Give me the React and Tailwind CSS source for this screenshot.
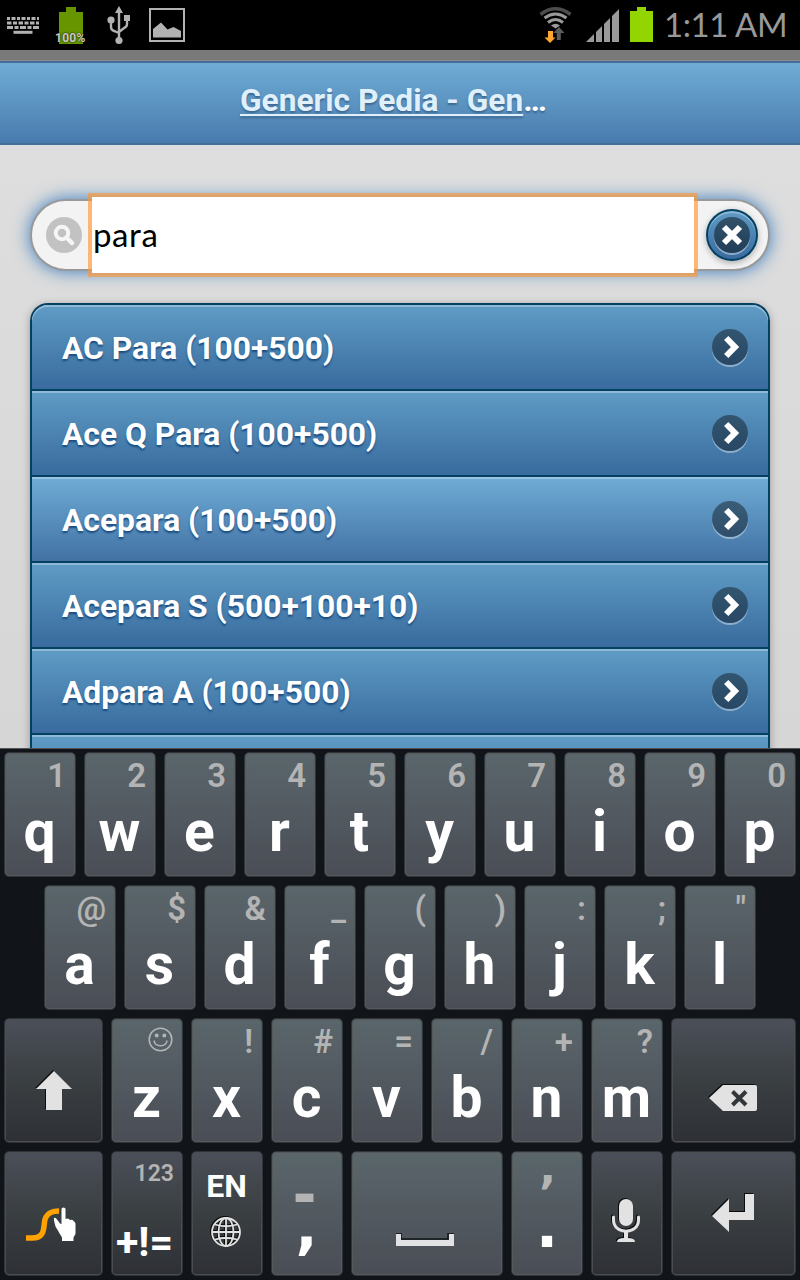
const medicines = [
  { name: "AC Para (100+500)" },
  { name: "Ace Q Para (100+500)" },
  { name: "Acepara (100+500)", active: true },
  { name: "Acepara S (500+100+10)" },
  { name: "Adpara A (100+500)" },
  { name: "" },
];

const topRow = [["q", "1"], ["w", "2"], ["e", "3"], ["r", "4"], ["t", "5"], ["y", "6"], ["u", "7"], ["i", "8"], ["o", "9"], ["p", "0"]];
const homeRow = [["a", "@"], ["s", "$"], ["d", "&"], ["f", "_"], ["g", "("], ["h", ")"], ["j", ":"], ["k", ";"], ["l", '"']];
const bottomRow = [["x", "!"], ["c", "#"], ["v", "="], ["b", "/"], ["n", "+"], ["m", "?"]];

function StatusBar() {
  return (
    <div className="flex h-[50px] shrink-0 items-start bg-black">
      <svg className="mt-4 ml-[7px] shrink-0" width="32" height="19" viewBox="0 0 32 19">
        <g stroke="#b2b2b2" strokeWidth="3">
          <path d="M0 2.5h32" strokeDasharray="3 1.5 4 1.5" />
          <path d="M0 7h32" strokeDasharray="4.5 1.5 4 1.5" />
          <path d="M0 11.5h32" strokeDasharray="6 1.5 4 1.5" />
          <path d="M6.5 16.3h19" />
        </g>
      </svg>
      <div className="relative mt-[7px] ml-5 h-[37px] w-6 shrink-0">
        <svg width="24" height="37" viewBox="0 0 24 37">
          <path d="M7 0h10v5h7v32H0V5h7z" fill="#669500" />
        </svg>
        <span className="absolute top-[25px] -left-1 text-[12px] leading-none font-bold tracking-[0.3px] text-[#c8c8c8] [text-shadow:0_0_2px_#000]">
          100%
        </span>
      </div>
      <svg className="mt-[6px] ml-[24px] shrink-0" width="24" height="39" viewBox="0 0 24 39">
        <g fill="none" stroke="#b2b2b2" strokeWidth="2.4">
          <path d="M12 5v30M4 14v7q0 3 3 4l5 2M20 11v7q0 3-3 4l-5 4" />
        </g>
        <g fill="#b2b2b2">
          <path d="M12 0l4 7H8zM17 9h6v6h-6z" />
          <circle cx="4" cy="14" r="3.6" />
          <circle cx="12" cy="34.5" r="3.6" />
        </g>
      </svg>
      <svg className="mt-2 ml-[18px] shrink-0" width="36" height="34" viewBox="0 0 36 34">
        <path d="M1 1h34v32H1z" fill="none" stroke="#b2b2b2" strokeWidth="2" />
        <path d="M4 29.500V21l8-6.500 6.500 7 6-2.500 7.500 4v6.500z" fill="#b2b2b2" />
      </svg>

      <svg className="mt-[7px] ml-auto shrink-0" width="33" height="36" viewBox="0 0 33 36">
        <g fill="none" stroke="#9a9a9a" strokeWidth="3">
          <path d="M1.500 7.500Q16.500-4 31.500 7.500" stroke="#4c4c4c" strokeWidth="3.500" />
          <path d="M5.500 11Q16.500 3 27.500 11" />
          <path d="M9 15.500Q16.500 9.500 24 15.500" />
        </g>
        <path d="M12 18.500q4.500-3.500 9 0l-4.500 3z" fill="#9a9a9a" />
        <path d="M20 20l5.500 6h-3.700v7h-4v-7h-3.500z" fill="#5c5c5c" />
        <path d="M9 24h5v6.500h2.500L11 36l-5.500-5.500H9z" fill="#ffa630" />
      </svg>
      <svg className="mt-[9px] ml-[14px] shrink-0" width="33" height="33" viewBox="0 0 33 33">
        <path d="M8 25v8H0zM16 17v16h-6V23zM24 9v24h-6V15zM33 0v33h-7V7z" fill="#999" />
      </svg>
      <svg className="mt-[7px] ml-[11px] shrink-0" width="23" height="35" viewBox="0 0 23 35">
        <path d="M7 0h9v4h7v31H0V4h7z" fill="#93d500" />
      </svg>
      <div className="mt-[5px] ml-[11px] w-[136px] shrink-0 font-['Lato'] text-[33px] leading-[38px] tracking-[-0.4px] whitespace-nowrap text-[#999]">
        1:11 AM
      </div>
    </div>
  );
}

function SearchBar() {
  return (
    <div className="mx-[30px] mt-[54px] flex h-[72px] shrink-0 items-center rounded-full border-2 border-[#999] bg-[#f3f3f3] shadow-[0_0_18px_#387bbe]">
      <div className="ml-[14px] flex size-9 shrink-0 items-center justify-center rounded-full bg-[#c2c2c2]">
        <svg width="22" height="22" viewBox="0 0 22 22" fill="none" stroke="#f5f5f5">
          <circle cx="9" cy="9" r="6.300" strokeWidth="4" />
          <path d="M13.500 13.500l5.500 5.500" strokeWidth="4.500" strokeLinecap="round" />
        </svg>
      </div>
      <div className="ml-[6px] flex h-[84px] w-[610px] shrink-0 items-center border-4 border-[#ff9632]/65 bg-white bg-clip-padding pl-px font-['Lato'] text-[33px] tracking-[0.6px] text-black">
        <span className="-mt-0.5 leading-none">para</span>
      </div>
      <div className="ml-2 flex size-[52px] shrink-0 items-center justify-center rounded-full border-2 border-[#044062] bg-linear-to-b from-[#5f9cc5] to-[#396b9e] shadow-[inset_0_2px_0_rgba(255,255,255,0.3),0_2px_6px_rgba(0,0,0,0.3)]">
        <div className="flex size-9 items-center justify-center rounded-full bg-black/45 shadow-[0_2px_0_rgba(255,255,255,0.4)]">
          <svg width="22" height="22" viewBox="0 0 22 22" stroke="#fff" strokeWidth="6">
            <path d="M3 3l16 16M19 3L3 19" />
          </svg>
        </div>
      </div>
    </div>
  );
}

function MedicineRow({ name, active }) {
  return (
    <li
      className={`flex h-[86px] shrink-0 items-center justify-between border-t-2 border-[#044062] pr-5 pl-[30px] shadow-[inset_0_2px_0_rgba(255,255,255,0.3)] first:rounded-t-[16px] first:border-t-0 first:h-[84px] bg-linear-to-b ${
        active ? "from-[#6facd5] to-[#4272a4]" : "from-[#5f9cc5] to-[#396b9e]"
      }`}
    >
      <span className="mt-1 text-[31.8px] leading-none font-bold text-white [text-shadow:0_2px_2px_#194b7e]">{name}</span>
      <div className="flex size-9 items-center justify-center rounded-full bg-black/40 shadow-[0_2px_0_rgba(255,255,255,0.4)]">
        <svg width="20" height="24" viewBox="0 0 20 24" fill="none" stroke="#fff" strokeWidth="6">
          <path d="M6.200 3l8.800 9-8.800 9" />
        </svg>
      </div>
    </li>
  );
}

function Key({ dark, size = "w-[72px]", children }) {
  return (
    <div
      className={`flex h-[125px] shrink-0 flex-col items-center rounded-[5px] border pt-px pr-px ${size} ${
        dark
          ? "border-[#303337] bg-linear-to-b from-[#4b4f59] via-[#3a3f42] to-[#2e3035] shadow-[inset_0_0_0_1px_#4b4e51]"
          : "border-[#303539] bg-linear-to-b from-[#5a666b] to-[#4a4d55] shadow-[inset_0_0_0_1px_#565a5b]"
      }`}
    >
      {children}
    </div>
  );
}

function LetterKey({ letter, hint }) {
  return (
    <Key>
      <div className="mt-[5px] flex h-[33px] w-full justify-end pr-2 text-[33px] leading-none font-semibold text-[#b4b4b4]">
        {hint}
      </div>
      <div className="mt-[11px] text-[57px] leading-none font-bold text-white">{letter}</div>
    </Key>
  );
}

function Keyboard() {
  return (
    <div className="flex h-[532px] shrink-0 flex-col gap-2 border-t border-[#555] bg-[#111419] pt-[3px]">
      <div className="flex gap-2 pl-1">
        {topRow.map(([letter, hint]) => (
          <LetterKey key={letter} letter={letter} hint={hint} />
        ))}
      </div>
      <div className="flex gap-2 pl-11">
        {homeRow.map(([letter, hint]) => (
          <LetterKey key={letter} letter={letter} hint={hint} />
        ))}
      </div>
      <div className="flex gap-2 pl-1">
        <Key dark size="w-[99px]">
          <svg className="mt-[51px] ml-px drop-shadow-[-1px_-1px_0_#0b0c0d]" width="36" height="39" viewBox="0 0 36 39">
            <path d="M18 0l18 18H26v21H10V18H0z" fill="#e2e2e2" />
          </svg>
        </Key>
        <LetterKey
          letter="z"
          hint={
            <svg className="mt-[2px]" width="25" height="25" viewBox="0 0 25 25" fill="none" stroke="#b4b4b4" strokeWidth="1.600">
              <circle cx="12.500" cy="12.500" r="11.300" />
              <path d="M6 13.500c1 7 12 7 13 0" />
              <circle cx="8.700" cy="8.500" r="1.200" fill="#b4b4b4" />
              <circle cx="16.300" cy="8.500" r="1.200" fill="#b4b4b4" />
            </svg>
          }
        />
        {bottomRow.map(([letter, hint]) => (
          <LetterKey key={letter} letter={letter} hint={hint} />
        ))}
        <Key dark size="w-[125px]">
          <svg className="mt-[65px] drop-shadow-[-1px_-1px_0_#0b0c0d]" width="48" height="27" viewBox="0 0 48 27">
            <path d="M14 0h32q2 0 2 2v22q0 2-2 2H14L0 13z" fill="#e2e2e2" />
            <path d="M23.500 6.500l13.500 13.500M37 6.500L23.500 20" stroke="#33373a" strokeWidth="4" />
          </svg>
        </Key>
      </div>
      <div className="flex gap-2 pl-1">
        <Key dark size="w-[99px]">
          <svg className="mt-[54px] -ml-[5px]" width="50" height="35" viewBox="0 0 50 35">
            <path d="M0 31h6c16 0 10-15 14-21q3-6 13-6" fill="none" stroke="#ffa200" strokeWidth="5.500" />
            <path d="M35.500 2q0-1.500 2-1.500t2 1.500v10q3-1.500 4.500 1 3-1 4 1.500 1.500.5 1.500 2.500v10l-2 3.500V34H36v-3.500l-6.500-11q-2-7-1.500-8.500 1.500-1 3 1.500l3 4 1.500.5z" fill="#fff" />
          </svg>
        </Key>
        <Key dark>
          <div className="mt-[9px] w-full pr-[7px] text-right text-[23px] leading-none font-semibold text-[#b4b4b4]">123</div>
          <div className="mt-[37px] pr-1 text-[41px] leading-none font-bold text-white">+!=</div>
        </Key>
        <Key dark>
          <div className="mt-[17px] text-[32px] leading-none font-bold text-white">EN</div>
          <svg className="mt-[15px] -ml-px drop-shadow-[-1px_-1px_0_#0b0c0d]" width="30" height="30" viewBox="0 0 30 30" fill="none" stroke="#e2e2e2" strokeWidth="1.800">
            <circle cx="15" cy="15" r="14" />
            <ellipse cx="15" cy="15" rx="7.500" ry="14" />
            <path d="M15 1v28M1 15h28M4 7.500q11 3.500 22 0M4 22.500q11-3.500 22 0" />
          </svg>
        </Key>
        <Key>
          <div className="mt-[13px] pr-1 font-['DejaVu_Sans'] text-[58px] leading-none font-bold text-[#b4b4b4]">-</div>
          <div className="-mt-[25px] font-['DejaVu_Sans'] text-[58px] leading-none font-bold text-white">,</div>
        </Key>
        <Key size="w-[152px]">
          <svg className="mt-[80px] -ml-[3px]" width="58" height="14" viewBox="0 0 58 14">
            <path d="M0 1V0h5v6h47V0h6v1" fill="none" stroke="#111419" strokeWidth="1.500" />
            <path d="M0 1h5v6h48V1h5v12H0z" fill="#e2e2e4" />
          </svg>
        </Key>
        <Key>
          <div className="mt-[17px] pl-0.5 font-['DejaVu_Sans'] text-[46px] leading-none font-bold text-[#b4b4b4]">’</div>
          <div className="-mt-[18px] pl-px font-['DejaVu_Sans'] text-[58px] leading-none font-bold text-white">.</div>
        </Key>
        <Key dark>
          <svg className="mt-[46px] -ml-px drop-shadow-[-1px_-1px_0_#0b0c0d]" width="30" height="44" viewBox="0 0 30 44">
            <rect x="8" y="0" width="14" height="27" rx="7" fill="#e2e2e2" />
            <path d="M2.500 18v3c0 15 25 15 25 0v-3" fill="none" stroke="#e2e2e2" strokeWidth="3" strokeLinecap="round" />
            <path d="M13 32h4v7q7 0 7 4H6q0-4 7-4z" fill="#e2e2e2" />
          </svg>
        </Key>
        <Key dark size="w-[125px]">
          <svg className="mt-[41px] drop-shadow-[-1px_-1px_0_#0b0c0d]" width="42" height="39" viewBox="0 0 42 39">
            <path d="M33 0h9v26H17v12L0 22 17 5v13h16z" fill="#e2e2e2" />
          </svg>
        </Key>
      </div>
    </div>
  );
}

export default function App() {
  return (
    <div className="flex h-[1280px] w-[800px] flex-col overflow-hidden bg-[#ddd] font-['Roboto',sans-serif]">
      <StatusBar />
      <div className="h-[11px] shrink-0 border-b border-[#8a8a8a] bg-[#797979]" />
      <header className="flex h-[84px] shrink-0 justify-center border-y-2 border-[#456f9a] bg-linear-to-b from-[#6facd5] to-[#497bae] pt-[22px]">
        <h1 className="w-[320px] text-[31.7px] leading-none font-bold text-white [text-shadow:0_2px_2px_#3e6790]">
          <a className="text-[#dff0fa] underline decoration-2 underline-offset-[3px]">Generic Pedia - Gen</a>…
        </h1>
      </header>
      <main className="flex min-h-0 flex-1 flex-col overflow-hidden bg-linear-to-b from-[#dedede] to-[#d6d6d6]">
        <SearchBar />
        <ul className="mx-[30px] mt-8 flex shrink-0 flex-col rounded-t-[18px] border-2 border-b-0 border-[#044062] shadow-[0_2px_8px_rgba(0,0,0,0.3)]">
          {medicines.map((item, i) => (
            <MedicineRow key={i} {...item} />
          ))}
        </ul>
      </main>
      <Keyboard />
    </div>
  );
}
